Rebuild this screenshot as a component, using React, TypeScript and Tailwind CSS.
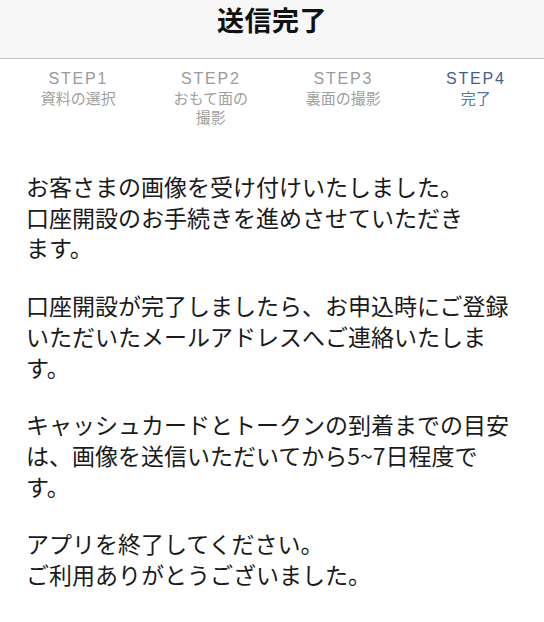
import React from 'react';

const steps = [
  { label: 'STEP1', lines: ['資料の選択'], active: false },
  { label: 'STEP2', lines: ['おもて面の', '撮影'], active: false },
  { label: 'STEP3', lines: ['裏面の撮影'], active: false },
  { label: 'STEP4', lines: ['完了'], active: true },
];

const paragraphs = [
  ['お客さまの画像を受け付けいたしました。', '口座開設のお手続きを進めさせていただき', 'ます。'],
  ['口座開設が完了しましたら、お申込時にご登録', 'いただいたメールアドレスへご連絡いたしま', 'す。'],
  ['キャッシュカードとトークンの到着までの目安', 'は、画像を送信いただいてから5~7日程度で', 'す。'],
  ['アプリを終了してください。', 'ご利用ありがとうございました。'],
];

export default function App() {
  return (
    <div
      className="w-[544px] h-[622px] bg-white overflow-hidden"
      style={{ fontFamily: '"Noto Sans CJK JP", "Noto Sans", sans-serif' }}
    >
      {/* Header */}
      <div className="h-[59px] bg-[#f7f7f7] border-b border-[#c4c4c4] flex items-start justify-center">
        <h1 className="text-[27px] font-bold text-[#111] leading-none mt-[6px] tracking-[0.5px]">送信完了</h1>
      </div>

      {/* Steps */}
      <div className="grid grid-cols-4 pt-[11px] pl-[12px] pr-[2px]">
        {steps.map((s) => (
          <div key={s.label} className="flex flex-col items-center text-[15px] leading-[19px]">
            <span
              className={
                s.active
                  ? 'text-[16px] leading-[18px] text-[#41608f] tracking-[1.8px]'
                  : 'text-[16px] leading-[18px] text-[#9a9a9a] tracking-[1.8px]'
              }
              style={{ fontFamily: '"Liberation Sans", "Noto Sans CJK JP", sans-serif' }}
            >
              {s.label}
            </span>
            {s.lines.map((l) => (
              <span key={l} className={s.active ? 'text-[#5676ad]' : 'text-[#a0a0a0]'}>
                {l}
              </span>
            ))}
          </div>
        ))}
      </div>

      {/* Body */}
      <div className="pl-[26px] pt-[45px] text-[23px] leading-[30.7px] text-[#1a1a1a]">
        {paragraphs.map((p, i) => (
          <p key={i} className="mb-[27px]">
            {p.map((line, j) => (
              <React.Fragment key={j}>
                {line}
                {j < p.length - 1 && <br />}
              </React.Fragment>
            ))}
          </p>
        ))}
      </div>
    </div>
  );
}
